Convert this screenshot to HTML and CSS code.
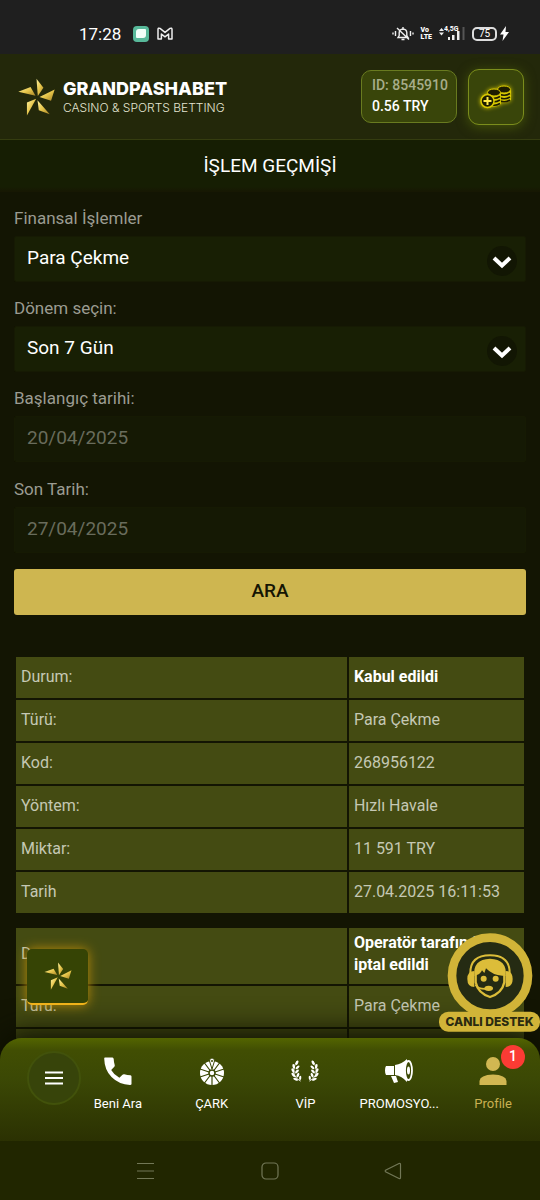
FILE: index.html
```html
<!DOCTYPE html>
<html lang="tr">
<head>
<meta charset="utf-8">
<meta name="viewport" content="width=device-width, initial-scale=1">
<title>İşlem Geçmişi</title>
<link rel="stylesheet" href="styles.css">
</head>
<body>
<svg class="defs" aria-hidden="true">
  <defs>
    <linearGradient id="gold" x1="0" y1="0" x2="1" y2="1">
      <stop offset="0" stop-color="#fff3a0"/><stop offset=".5" stop-color="#e6c54a"/><stop offset="1" stop-color="#a58226"/>
    </linearGradient>
    <symbol id="star" viewBox="52 234 112 114">
      <g fill="url(#gold)">
        <path d="M108 236L129 263L112 288Z"/>
        <path d="M163 268L152 302L117 291Z"/>
        <path d="M148 343L115 331L111 301Z"/>
        <path d="M79 347L79 308L107 296Z"/>
        <path d="M53 275L90 261L105 287Z"/>
      </g>
    </symbol>
    <symbol id="laurel" viewBox="0 0 12 24">
      <path d="M6 1Q1 9 3 16Q5 21 10 23" fill="none" stroke="currentColor" stroke-width="1"/>
      <g fill="currentColor">
        <ellipse cx="6" cy="3" rx="1.3" ry="2.6" transform="rotate(25 6 3)"/>
        <ellipse cx="2.4" cy="7" rx="1.3" ry="2.6" transform="rotate(-15 2.4 7)"/>
        <ellipse cx="6.6" cy="8" rx="1.3" ry="2.6" transform="rotate(50 6.6 8)"/>
        <ellipse cx="1.6" cy="11.5" rx="1.3" ry="2.6" transform="rotate(-25 1.6 11.5)"/>
        <ellipse cx="6" cy="12.5" rx="1.3" ry="2.6" transform="rotate(45 6 12.5)"/>
        <ellipse cx="2" cy="16.3" rx="1.3" ry="2.7" transform="rotate(-40 2 16.3)"/>
        <ellipse cx="7" cy="16.5" rx="1.3" ry="2.6" transform="rotate(25 7 16.5)"/>
        <ellipse cx="4.5" cy="21" rx="1.3" ry="2.8" transform="rotate(-65 4.5 21)"/>
        <ellipse cx="9.5" cy="19.5" rx="1.2" ry="2.4" transform="rotate(5 9.5 19.5)"/>
      </g>
    </symbol>
  </defs>
</svg>
<div class="app">
  <div class="status">
    <div class="status-group">
      <span class="clock">17:28</span>
      <svg width="16" height="16" viewBox="0 0 16 16"><rect width="16" height="16" rx="4" fill="#58b99a"/><path d="M6 3H12Q13 3 13 4V9Q13 12 10 12H4Q3 12 3 11V6Q3 3 6 3Z" fill="#f2fff9"/></svg>
      <svg width="16" height="13" viewBox="0 0 16 13"><path d="M1 12V2.5Q1 .6 3 1.4L8 5.4L13 1.4Q15 .6 15 2.5V12H11.6V7L8 9.8L4.4 7V12Z" fill="none" stroke="#eee" stroke-width="1.5" stroke-linejoin="round"/></svg>
    </div>
    <div class="status-group status-right">
      <svg width="22" height="15" viewBox="0 0 22 15" fill="none" stroke="#eee" stroke-width="1.4"><path d="M6 11.5H16L14.8 9.5V6.5Q14.6 3.3 11 3Q7.4 3.3 7.2 6.5V9.5ZM11 3V1M9.5 13.5H12.5M5 2L17 13.5M3.5 5V10M18.5 5V10M1 6.5V8.5M21 6.5V8.5"/></svg>
      <span class="volte">Vo<br>LTE</span>
      <span class="signal"><span class="net">4,5G</span>
        <svg width="26" height="15" viewBox="0 0 26 15"><path d="M0 5L2.5 2L5 5ZM0 6.5L2.5 9.500L5 6.500Z" fill="#eee"/><path d="M9 11H11V14H9ZM13 9H15.500V14H13ZM18 5H20.500V14H18Z" fill="#eee"/><path d="M23.500 1H25.500V14H23.500Z" fill="#555"/></svg>
      </span>
      <span class="battery">75</span>
      <svg class="bolt" width="9" height="15" viewBox="0 0 9 15"><path d="M6 0L0 8.500H3.500L2.500 15L9 6H5.500Z" fill="#fff"/></svg>
    </div>
  </div>

  <header class="header">
    <a class="brand" href="#">
      <svg class="brand-star" width="37" height="38"><use href="#star"/></svg>
      <span class="brand-text"><span class="brand-name">GRANDPASHABET</span><span class="brand-sub">CASINO &amp; SPORTS BETTING</span></span>
    </a>
    <div class="balance"><span class="user-id">ID: 8545910</span><span>0.56 TRY</span></div>
    <button class="deposit" type="button" aria-label="Para yatır">
      <svg width="34" height="26" viewBox="0 0 34 26">
        <path d="M18 6V16Q25 21 32 16V6Z" fill="#d8c800"/>
        <path d="M19.500 9.500Q25 13 31 9.500M19.500 13Q25 16.500 31 13M19.500 16Q25 19.500 31 16" fill="none" stroke="#1d1c00" stroke-width="1.600"/>
        <ellipse cx="25" cy="5.500" rx="6.500" ry="3.500" fill="#1d1c00" stroke="#d8c800"/>
        <path d="M8 9V20Q15 25 22 20V9Z" fill="#d8c800"/>
        <path d="M10 12.500Q15 16 21 12.500M10 16Q15 19.500 21 16M10 19.500Q15 23 21 19.500" fill="none" stroke="#1d1c00" stroke-width="1.600"/>
        <ellipse cx="15" cy="8.500" rx="6.500" ry="3.500" fill="#1d1c00" stroke="#d8c800"/>
        <circle cx="8.500" cy="17" r="6.500" fill="#1d1c00" stroke="#d8c800" stroke-width="1.500"/>
        <path d="M8.500 13V21M4.500 17H12.500" stroke="#ffe94a" stroke-width="2"/>
      </svg>
    </button>
  </header>
  <h1 class="title">İŞLEM GEÇMİŞİ</h1>

  <main class="content">
    <form class="form">
      <label for="kind">Finansal İşlemler</label>
      <div class="picker">
        <select id="kind"><option>Para Çekme</option></select>
        <svg viewBox="0 0 30 30" width="30" height="30"><circle cx="15" cy="15" r="15" fill="#121603"/><path d="M7 12L15 19.500L23 12" fill="none" stroke="#fff" stroke-width="4"/></svg>
      </div>
      <label for="period">Dönem seçin:</label>
      <div class="picker">
        <select id="period"><option>Son 7 Gün</option></select>
        <svg viewBox="0 0 30 30" width="30" height="30"><circle cx="15" cy="15" r="15" fill="#121603"/><path d="M7 12L15 19.500L23 12" fill="none" stroke="#fff" stroke-width="4"/></svg>
      </div>
      <label for="from">Başlangıç tarihi:</label>
      <input id="from" type="text" value="20/04/2025" disabled>
      <label class="last-label" for="to">Son Tarih:</label>
      <input id="to" type="text" value="27/04/2025" disabled>
      <button class="search" type="button">ARA</button>
    </form>

    <table class="record">
      <tr><td>Durum:</td><td><strong>Kabul edildi</strong></td></tr>
      <tr><td>Türü:</td><td>Para Çekme</td></tr>
      <tr><td>Kod:</td><td>268956122</td></tr>
      <tr><td>Yöntem:</td><td>Hızlı Havale</td></tr>
      <tr><td>Miktar:</td><td>11 591 TRY</td></tr>
      <tr><td>Tarih</td><td>27.04.2025 16:11:53</td></tr>
    </table>
    <table class="record">
      <tr class="tall"><td>Durum:</td><td><strong>Operatör tarafından iptal edildi</strong></td></tr>
      <tr><td>Türü:</td><td>Para Çekme</td></tr>
      <tr><td>Kod:</td><td></td></tr>
    </table>
  </main>

  <div class="bottom">
    <button class="quick" type="button" aria-label="Grandpashabet"><svg width="28" height="28"><use href="#star"/></svg></button>
    <button class="support" type="button">
      <svg viewBox="27 22 303 297" aria-hidden="true">
        <circle cx="180" cy="150" r="114" fill="#252b13" stroke="#d1b438" stroke-width="26"/>
        <rect x="27" y="258" width="303" height="60" rx="28" fill="#d1b438"/>
        <path d="M121 142Q121 89 180 89Q239 89 239 142" fill="none" stroke="#dcbd39" stroke-width="6"/>
        <path d="M133 150Q128 101 180 99Q232 101 227 150L217 150Q188 149 168 128L163 142L156 134Q150 149 133 150Z" fill="#dcbd39"/>
        <path d="M133 136V184Q112 184 112 160Q112 136 133 136ZM227 136V184Q248 184 248 160Q248 136 227 136Z" fill="#dcbd39"/>
        <path d="M137 148V170Q144 203 180 214Q216 203 223 170V148" fill="none" stroke="#dcbd39" stroke-width="7"/>
        <path d="M136 178Q148 192 172 189" fill="none" stroke="#dcbd39" stroke-width="5"/>
        <ellipse cx="176" cy="188" rx="13" ry="8" fill="#dcbd39"/>
        <circle cx="161" cy="159" r="9" fill="#dcbd39"/><circle cx="197" cy="159" r="9" fill="#dcbd39"/>
      </svg>
      <span class="support-text">CANLI DESTEK</span>
    </button>

    <nav class="tabs">
      <button class="menu" type="button" aria-label="Menü"><svg width="18" height="14" viewBox="0 0 18 14"><path d="M0 1.500H18M0 7H18M0 12.500H18" stroke="#fff" stroke-width="2"/></svg></button>
      <a class="tab" href="#">
        <svg width="28" height="28" viewBox="0 0 28 28"><path d="M1 .5H8.500Q9.500 .5 9.700 2Q9.800 5 10.700 8Q11 9 10.300 9.800L7.200 13Q10 18 15.400 20.800L18.500 17.700Q19.300 17 20.300 17.300Q23.300 18.200 26.500 18.300Q27.500 18.500 27.500 19.500V27Q27.500 28 26 28Q15 27.500 7.500 20Q.5 13 .2 1.500Q.2 .5 1 .5Z" fill="#fff"/></svg>
        <span>Beni Ara</span></a>
      <a class="tab" href="#">
        <svg width="28" height="28" viewBox="0 0 28 28"><circle cx="14" cy="16" r="12" fill="#fff"/><path d="M14 16V29M2 12L26 20M2 20L26 12M6.500 6L21.500 26M21.500 6L6.500 26" stroke="#3b4805" stroke-width="1.200"/><path d="M11.500 4Q11.500 1 14 1Q16.500 1 16.500 4L14 12Z" fill="#fff" stroke="#3b4805"/><circle cx="14" cy="4" r="1" fill="#3b4805"/><circle cx="14" cy="16" r="3" fill="#fff" stroke="#3b4805" stroke-width="1.500"/></svg>
        <span>ÇARK</span></a>
      <a class="tab" href="#">
        <svg class="ink" width="28" height="28" viewBox="0 0 28 28"><use href="#laurel" x="0" y="3" width="12" height="22"/><g transform="translate(28 0) scale(-1 1)"><use href="#laurel" x="0" y="3" width="12" height="22"/></g></svg>
        <span>VİP</span></a>
      <a class="tab" href="#">
        <svg width="28" height="28" viewBox="0 0 28 28"><path d="M1 9H9V18H1Q0 17 0 13.500Q0 10 1 9ZM10 8Q17 7 22 2V25Q17 19 10 18ZM6 19H11L13 25L9 26Z" fill="#fff"/><ellipse cx="23.500" cy="13.500" rx="3.500" ry="9.500" fill="#3b4805" stroke="#fff" stroke-width="1.800"/><ellipse cx="23.500" cy="13.500" rx="1.500" ry="4" fill="#fff"/></svg>
        <span>PROMOSYO...</span></a>
      <a class="tab active" href="#">
        <svg width="28" height="28" viewBox="0 0 28 28"><circle cx="14" cy="7" r="7" fill="#d1b752"/><path d="M.5 28V24Q1 18 14 17.500Q27 18 27.500 24V28Z" fill="#d1b752"/></svg>
        <span>Profile</span><b class="badge">1</b></a>
    </nav>
  </div>
  <div class="system">
    <svg width="18" height="18" viewBox="0 0 18 18"><path d="M0 1.500H17M0 9H17M0 16.500H17"/></svg>
    <svg width="18" height="18" viewBox="0 0 18 18"><rect x="1" y="1" width="16" height="16" rx="4"/></svg>
    <svg width="18" height="18" viewBox="0 0 18 18"><path d="M15 1.500Q16.500 1 16.500 2.500V15.500Q16.500 17 15 16.500L1.500 9.700Q.8 9 1.500 8.300Z"/></svg>
  </div>
</div>
</body>
</html>
```
FILE: styles.css
```css
* { box-sizing: border-box; }
body { margin: 0; background: #131503; color: #fff; font-family: Roboto, sans-serif; }
button, select, input { font-family: inherit; }
button { border: 0; padding: 0; color: inherit; cursor: pointer; }
a { color: inherit; text-decoration: none; }
svg { display: block; flex: none; }
.defs { position: absolute; width: 0; height: 0; }
.app { height: 100vh; display: flex; flex-direction: column; overflow: hidden; }

.status { flex: none; height: 54px; padding: 13px 31px 0 79px; background: #1f1f1f; display: flex; justify-content: space-between; align-items: center; }
.status-group { display: flex; align-items: center; gap: 8px; }
.status-right { gap: 7px; }
.clock { font-size: 17px; line-height: 20px; margin-right: 4px; }
.volte { font-size: 7px; line-height: 7px; font-weight: 900; }
.signal { position: relative; }
.net { position: absolute; left: 5px; top: -1px; font-size: 7px; line-height: 8px; font-weight: 700; }
.battery { width: 25px; height: 14px; border: 2px solid #ddd; border-radius: 5px; font-size: 10px; line-height: 10px; text-align: center; }
.bolt { margin-left: -4px; }

.header { flex: none; height: 86px; padding: 0 16px 0 18px; background: #23280a; border-bottom: 1px solid #353d10; display: flex; align-items: center; gap: 11px; }
.brand { display: flex; align-items: center; gap: 8px; margin-right: auto; }
.brand-text { display: flex; flex-direction: column; white-space: nowrap; padding-top: 2px; }
.brand-name { font: 800 18px/20px Inter, sans-serif; }
.brand-sub { font: 300 12px/18px Inter, sans-serif; color: #e3e5d2; }
.balance { height: 53px; padding: 4px 8px 4px 10px; background: #39450a; border: 1px solid #697b20; border-radius: 10px; display: flex; flex-direction: column; font-size: 14px; line-height: 21px; font-weight: 500; white-space: nowrap; }
.user-id { color: #a7ad8a; }
.deposit { width: 56px; height: 56px; background: #39450a; border: 1px solid #7b8d1c; border-radius: 11px; box-shadow: 0 2px 12px #46540a; display: grid; place-items: center; }
.deposit svg { filter: drop-shadow(0 0 2px #d8c800); }
.title { flex: none; margin: 0; height: 52px; background: linear-gradient(#161e03 90%, #171703); font-size: 19px; line-height: 51px; font-weight: 400; text-align: center; }

.content { flex: 1; min-height: 0; overflow: hidden; padding: 0 14px; margin-bottom: -26px; }
.form { display: flex; flex-direction: column; }
.form label { padding: 16px 0 8px; font-size: 17px; line-height: 20px; color: #9b9c92; }
.form .last-label { padding-top: 17px; }
.picker { position: relative; }
.picker svg { position: absolute; right: 9px; top: 10px; pointer-events: none; }
.form select, .form input { display: block; width: 100%; height: 46px; padding: 0 12px 4px; border: 1px solid #161a03; border-radius: 2px; background: #181f04; color: #fff; font-size: 19px; appearance: none; opacity: 1; }
.form input { background: #151904; color: #696c5c; }
.search { height: 46px; margin-top: 16px; padding-bottom: 4px; background: #ceb650; border-radius: 3px; color: #151503; font-size: 19px; font-weight: 500; }

.record { width: 100%; margin-top: 40px; border-spacing: 2px; table-layout: fixed; font-size: 16px; line-height: 22px; color: #c5c8b4; }
.record + .record { margin-top: 11px; }
.record td { height: 41px; padding: 8px 5px 10px; background: #444b12; }
.record td:first-child { width: 65.4%; }
.record .tall td { height: 56px; padding: 4px 5px 8px; }
.record strong { color: #fff; font-weight: 700; }

.bottom { position: relative; flex: none; }
.tabs { min-height: 103px; padding-top: 13px; border-radius: 22px 22px 0 0; background: linear-gradient(#536500, #414e03 12%, #3b4805 40%, #2b3102); box-shadow: 0 -6px 30px #0c0e02; display: grid; grid-template-columns: 71px repeat(5, 1fr); align-items: start; }
.menu { width: 54px; height: 54px; margin-left: 27px; border: 2px solid #42520b; border-radius: 50%; background: #37440a; display: grid; place-items: center; }
.tab { position: relative; padding-top: 6px; display: flex; flex-direction: column; align-items: center; gap: 10px; font-size: 13px; line-height: 18px; }
.ink { color: #fff; }
.active { color: #c9b052; }
.badge { position: absolute; left: 50%; top: -6px; margin-left: 8px; width: 24px; height: 24px; border-radius: 50%; background: #fb3b34; color: #fff; font-size: 14px; line-height: 23px; font-weight: 500; text-align: center; }
.quick { position: absolute; left: 27px; bottom: 136px; width: 61px; height: 56px; border-radius: 5px; background: #364405; border-bottom: 2px solid #f0b21a; box-shadow: 0 0 12px #b98a0a; display: grid; place-items: center; }
.support { position: absolute; right: 0; bottom: 109px; width: 101px; background: none; z-index: 1; }
.support-text { position: absolute; inset: auto 0 0; color: #2b2a10; font: 800 12px/20px Inter, sans-serif; text-align: center; white-space: nowrap; }

.system { position: relative; flex: none; height: 59px; padding: 0 138px 0 137px; background: #212600; display: flex; justify-content: space-between; align-items: center; }
.system svg { fill: none; stroke: #727756; stroke-width: 1.2; }
```
